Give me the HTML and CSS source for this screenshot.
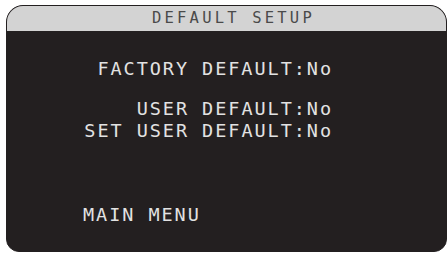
FILE: index.html
```html
<!DOCTYPE html>
<html>
<head>
<meta charset="utf-8">
<link rel="stylesheet" href="styles.css">
</head>
<body>
<div class="panel">
  <div class="header">DEFAULT SETUP</div>
  <div class="content">
    <div class="group first">
      <div class="row">FACTORY DEFAULT:No</div>
    </div>
    <div class="group second">
      <div class="row">USER DEFAULT:No</div>
      <div class="row">SET USER DEFAULT:No</div>
    </div>
    <div class="menu">MAIN MENU</div>
  </div>
</div>
</body>
</html>
```
FILE: styles.css
```css
html, body {
  margin: 0;
  padding: 0;
  background: #ffffff;
}
body {
  width: 448px;
  height: 253px;
  overflow: hidden;
  font-family: "DejaVu Sans Mono", "Liberation Mono", monospace;
}
.panel {
  box-sizing: border-box;
  margin: 5px 0 0 6px;
  width: 441px;
  height: 247px;
  background: #231f20;
  border: 1.5px solid #231f20;
  border-radius: 17px 17px 13px 13px;
  overflow: hidden;
  display: flex;
  flex-direction: column;
}
.header {
  height: 25px;
  background: #d3d3d3;
  color: #4a4a4a;
  font-size: 15.5px;
  letter-spacing: 3.2px;
  line-height: 25px;
  padding-left: 145px;
  white-space: nowrap;
}
.content {
  color: #e2e2e2;
  font-size: 18.5px;
  letter-spacing: 1.95px;
  line-height: 22px;
  display: flex;
  flex-direction: column;
}
.group {
  width: 326px;
  text-align: right;
  white-space: nowrap;
}
.first {
  margin-top: 27px;
}
.second {
  margin-top: 18px;
}
.menu {
  margin-top: 62px;
  padding-left: 76px;
  white-space: nowrap;
}
```
